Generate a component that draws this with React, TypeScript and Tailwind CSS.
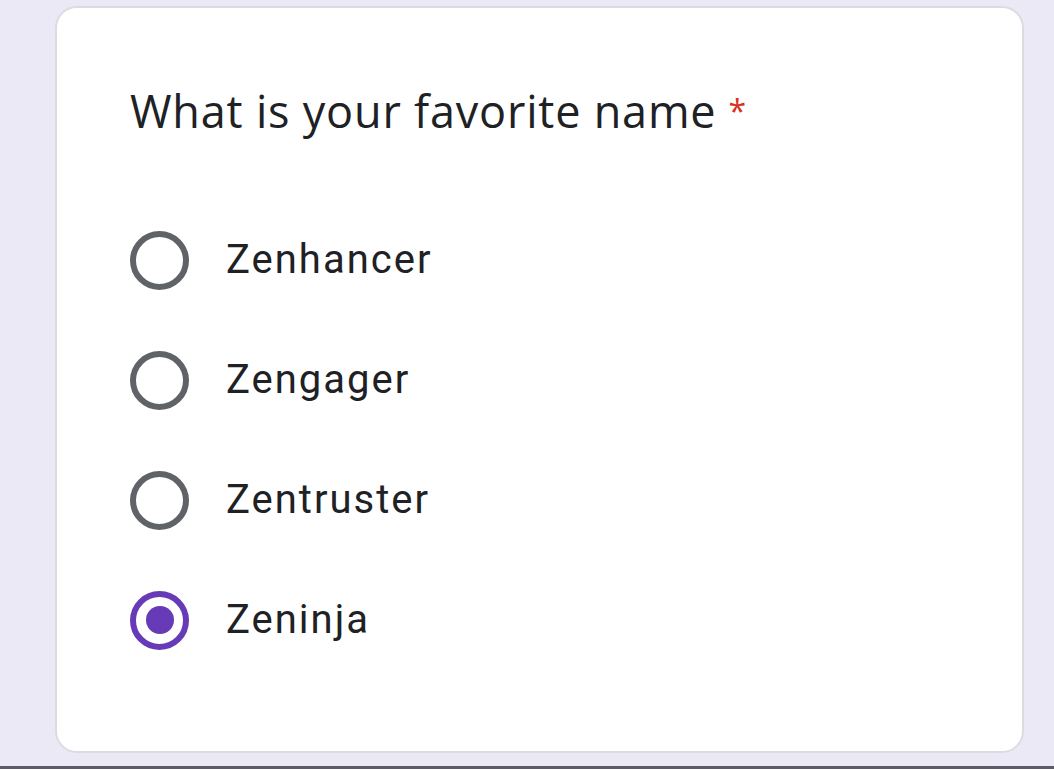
const options = ["Zenhancer", "Zengager", "Zentruster", "Zeninja"];

function Radio({ checked }: { checked: boolean }) {
  return (
    <div
      className={`w-[59px] h-[59px] rounded-full border-[6px] flex items-center justify-center shrink-0 ${
        checked ? "border-[#673ab7]" : "border-[#5f6368]"
      }`}
    >
      {checked && <div className="w-[28px] h-[28px] rounded-full bg-[#673ab7]" />}
    </div>
  );
}

export default function App() {
  const selected = "Zeninja";
  return (
    <div className="w-[1054px] h-[769px] bg-[#ece9f7] flex flex-col font-['Roboto',sans-serif] overflow-hidden">
      <div className="flex-1 pt-[6px] pl-[55px] pr-[30px]">
        <div className="h-[747px] bg-white rounded-[22px] border-2 border-[#dadce0] pl-[73px] pt-[75px]">
          <h1 className="font-['Open_Sans',sans-serif] text-[45px] tracking-[0.8px] leading-[56px] text-[#202124] font-normal">
            What is your favorite name
            <span className="text-[#d93025] text-[32px] align-top ml-[12px]">*</span>
          </h1>
          <div className="mt-[61px] flex flex-col">
            {options.map((o) => (
              <div key={o} className="h-[120px] flex items-center gap-[37px]">
                <Radio checked={o === selected} />
                <span className="text-[40px] tracking-[2px] text-[#202124]">{o}</span>
              </div>
            ))}
          </div>
        </div>
      </div>
      <div className="h-[3px] bg-[#5c5b66]" />
    </div>
  );
}
